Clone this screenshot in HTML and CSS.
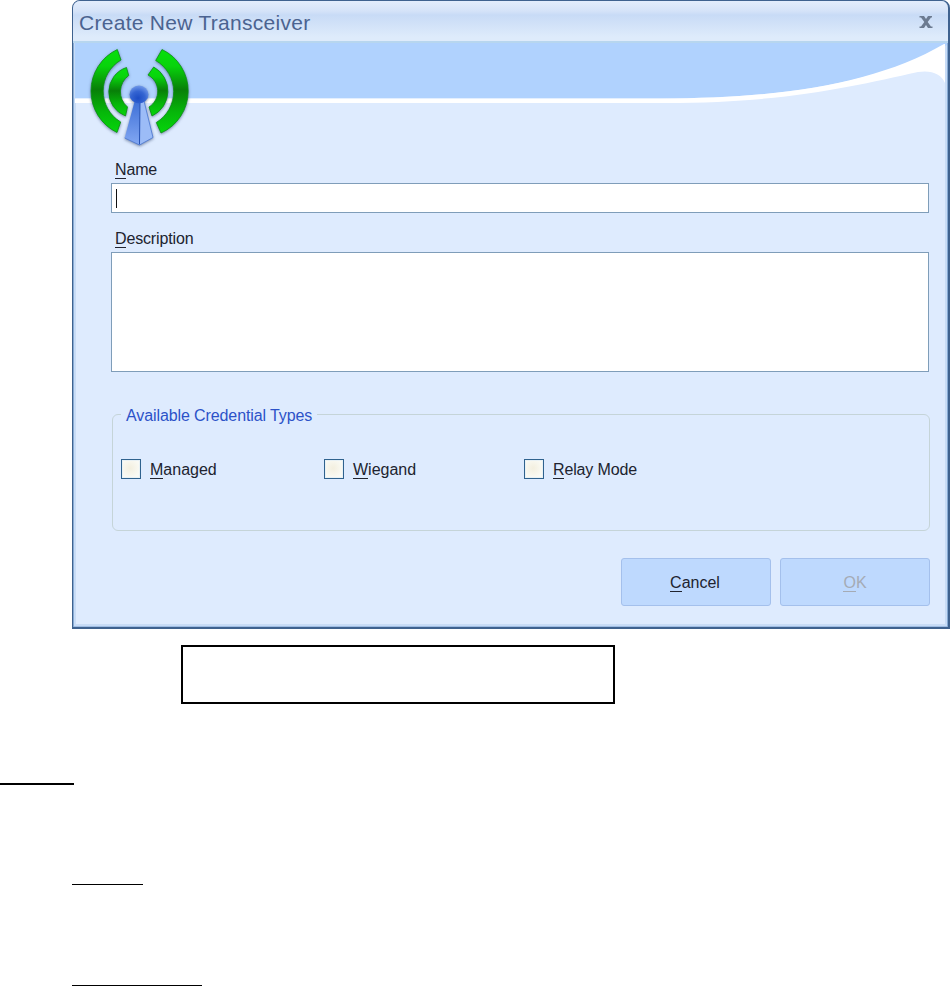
FILE: index.html
```
<!DOCTYPE html>
<html lang="en">
<head>
	<meta charset="UTF-8">
	<title>Create New Transceiver</title>
	<link rel="stylesheet" href="styles.css">
</head>
<body>
	<div class="dialog">
		<div class="title">
			<span class="title-text">Create New Transceiver</span>
			<svg class="close" width="14" height="12" viewBox="0 0 14 12"><path d="M.5 0h4.500l2 3 2-3H13v1.500h-1L8.700 6l3.300 4.500h1.500V12H9L7 9l-2 3H.5v-1.500H2L5.300 6 2 1.500H.5z"/></svg>
		</div>
		<div class="banner">
			<svg class="wave" width="872" height="64" viewBox="0 0 872 64">
				<path fill="#b0d2fe" d="M0 0H872V2C800 41 705 55.500 585 55.500H0z"/>
				<path fill="#fff" d="M0 55.500H585C705 55.500 800 41 869 1H870V40C866 31 857 27 843 29C780 43 710 60 590 60H0z"/>
			</svg>
			<svg class="logo" width="106" height="106" viewBox="0 0 106 106">
				<defs>
					<linearGradient id="green" x1="0" y1="0" x2="0" y2="1">
						<stop offset="0" stop-color="#06e00c"/>
						<stop offset=".2" stop-color="#08d30c"/>
						<stop offset=".48" stop-color="#087f08"/>
						<stop offset=".75" stop-color="#06b60a"/>
						<stop offset="1" stop-color="#05d50b"/>
					</linearGradient>
					<radialGradient id="ball" cx=".45" cy=".7" r=".75">
						<stop offset="0" stop-color="#1c4cc4"/>
						<stop offset=".5" stop-color="#3565d2"/>
						<stop offset="1" stop-color="#7ba2ee"/>
					</radialGradient>
					<linearGradient id="side" x1="0" y1="0" x2="0" y2="1">
						<stop offset="0" stop-color="#3c6ed6"/>
						<stop offset="1" stop-color="#83a8f3"/>
					</linearGradient>
				</defs>
				<g class="arcs" fill="url(#green)" stroke="#0b8d12" stroke-width=".8">
					<path d="M30.300 6.500A46 46 0 0 0 30 89.500L33.700 79A36 36 0 0 1 34 17z"/>
					<path d="M39.500 24.500A25.700 25.700 0 0 0 38.500 73L40.500 64A20 20 0 0 1 41.700 32.500z"/>
					<path d="M75 6.500A46 46 0 0 1 74 90L69.300 79.500A36 36 0 0 0 68.700 17.500z"/>
					<path d="M66.700 24A27.500 27.500 0 0 1 65 73L62 64A18.500 18.500 0 0 0 61 32z"/>
				</g>
				<g class="arcs">
					<path fill="url(#side)" d="M48 57L37.700 95L52.500 102L53 57z"/>
					<path fill="#9cbcf7" d="M53 57H57L66 94.500L52.500 102z"/>
					<path fill="none" stroke="#2350b4" d="M53 58L52.500 101.500"/>
					<path fill="none" stroke="#4a76d0" stroke-width=".8" d="M37.700 95L52.500 102L66 94.500L57 58"/>
					<ellipse fill="url(#ball)" cx="52" cy="51.500" rx="9.500" ry="9"/>
				</g>
			</svg>
		</div>
		<div class="form">
			<label class="name"><u>N</u>ame</label>
			<div class="field"><i class="caret"></i></div>
			<label class="desc"><u>D</u>escription</label>
			<div class="area"></div>
			<div class="group">
				<span class="legend">Available Credential Types</span>
				<div class="check"><i></i><span class="managed"><u>M</u>anaged</span></div>
				<div class="check"><i></i><span class="wiegand"><u>W</u>iegand</span></div>
				<div class="check"><i></i><span class="relay"><u>R</u>elay Mode</span></div>
			</div>
			<div class="buttons">
				<div class="btn"><span><u>C</u>ancel</span></div>
				<div class="btn off"><span><u>O</u>K</span></div>
			</div>
		</div>
	</div>
	<div class="caption"></div>
	<div class="rule rule1"></div>
	<div class="rule rule2"></div>
	<div class="rule rule3"></div>
</body>
</html>
```

FILE: styles.css
```
*{box-sizing: border-box;}
body{margin: 0;height: 986px;overflow: hidden;background: #fff;font: 16px/20px "Liberation Sans",Arial,sans-serif;color: #20232f;}
svg{display: block;}
u{text-decoration: none;border-bottom: 1px solid currentColor;display: inline-block;line-height: 17px;}

.dialog{width: 878px;height: 629px;margin-left: 72px;background: #deebfe;border: 1px solid #3f628f;border-bottom-width: 2px;border-right-width: 2px;border-radius: 8px 8px 0 0;box-shadow: inset 1px 0 #86aad4,inset -1px 0 #86aad4,inset 0 -1px #9fbde4,inset 3px 0 #c8dcf6,inset -3px 0 #c8dcf6,inset 0 -3px #c8dcf6;}
.title{height: 42px;padding: 0 15px 0 6px;display: flex;align-items: center;justify-content: space-between;border-bottom: 2px solid #b7d6ef;border-radius: 7px 7px 0 0;background: linear-gradient(#e3edfc,#d5e3f8 25%,#c8dbf6 35%,#deebfb 90%);}
.title-text{font-size: 21px;line-height: 24px;color: #4b6390;letter-spacing: .28px;padding-top: 3px;}
.close{fill: #6c7b91;margin-top: 2px;}
.banner{height: 64px;margin: 0 2px;position: relative;}
/* logo hangs over the wave */
.logo{position: absolute;left: 12px;top: 0;}
.arcs{filter: drop-shadow(0 1px 1.5px rgba(60,80,120,.65));}

.form{padding: 53px 19px 0 38px;}
.form label{display: block;height: 20px;padding-left: 4px;letter-spacing: -.15px;}
.field{height: 30px;margin-top: 3px;background: #fff;border: 1px solid #7f9db9;padding: 5px 4px;}
.caret{display: block;width: 1px;height: 19px;background: #111;}
.form .desc{margin-top: 16px;}
.area{height: 120px;margin-top: 3px;background: #fff;border: 1px solid #7f9db9;}
.group{height: 117px;margin: 42px -1px 0 1px;border: 1px solid #c5d4d8;border-radius: 6px;display: grid;grid-template-columns: 203px 200px 1fr;grid-template-rows: 20px 1fr;padding-left: 8px;}
.legend{grid-column: 1/-1;justify-self: start;margin: -9px 0 0;padding: 0 5px;background: #deebfe;color: #2c52c8;letter-spacing: -.1px;}
.check{display: flex;align-items: flex-start;padding-top: 24px;}
.check i{width: 20px;height: 20px;border: 1px solid #2f628e;background: radial-gradient(circle at 45% 45%,#f3efdf,#fafaf4 70%);box-shadow: inset 0 0 0 1px #e9f1f4;margin-right: 9px;}
.check span{padding-top: 1px;}
.relay{letter-spacing: -.15px;}
.buttons{display: flex;justify-content: flex-end;gap: 9px;margin: 27px -1px 0 0;}
.btn{width: 150px;height: 48px;padding: 1px 2px 0 0;border: 1px solid #a4c0ec;border-radius: 3px;background: #bed9fe;display: flex;align-items: center;justify-content: center;}
.off{color: #a5abb5;padding-right: 0;}

.caption{width: 434px;height: 59px;margin: 16px 0 0 181px;border: 2px solid #000;}
.rule{background: #000;height: 1px;margin-left: 72px;}
.rule1{width: 74px;height: 2px;margin: 79px 0 0;}
.rule2{width: 71px;margin-top: 99px;}
.rule3{width: 130px;margin-top: 100px;}
```
